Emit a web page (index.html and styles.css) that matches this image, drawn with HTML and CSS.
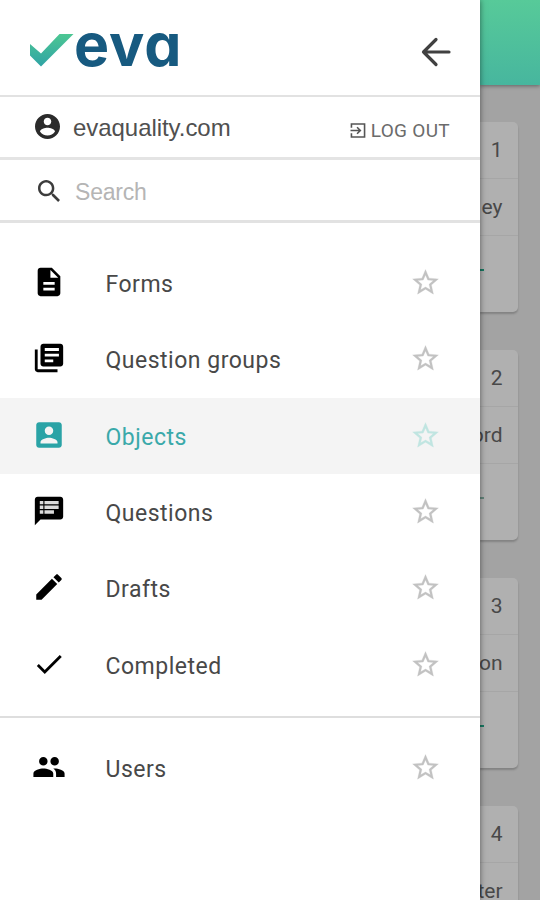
FILE: index.html
```
<!DOCTYPE html>
<html lang="en">
<head>
<meta charset="utf-8">
<title>eva</title>
<link rel="stylesheet" href="styles.css">
</head>
<body>
<div class="app">
  <aside class="drawer">
    <header class="brand">
      <div class="logo">
        <svg class="logo-check" viewBox="0 0 44 34" aria-hidden="true">
          <defs><linearGradient id="g" x1="0" y1="1" x2="0" y2="0"><stop offset="0" stop-color="#2fa3a5"/><stop offset="1" stop-color="#4dc793"/></linearGradient></defs>
          <path fill="url(#g)" d="M0 11L11 20.5L29.5 1H43.500L11 33.500L0 22.500Z"/>
        </svg>
        <span class="wordmark">eva</span>
      </div>
      <svg class="back" viewBox="0 0 30 30" aria-hidden="true"><path d="M28 15H2.500M15 2.500L2.500 15L15 27.500"/></svg>
    </header>
    <div class="account">
      <svg class="avatar" viewBox="2 2 20 20" aria-hidden="true"><path d="M12 2C6.480 2 2 6.480 2 12s4.480 10 10 10 10-4.480 10-10S17.520 2 12 2zm0 3c1.660 0 3 1.340 3 3s-1.340 3-3 3-3-1.340-3-3 1.340-3 3-3zm0 14.200c-2.500 0-4.710-1.280-6-3.220.030-1.990 4-3.080 6-3.080 1.990 0 5.970 1.090 6 3.080-1.290 1.940-3.500 3.220-6 3.220z"/></svg>
      <span class="domain">evaquality.com</span>
      <svg class="exit" viewBox="0 0 16 16" aria-hidden="true"><path d="M1 5V1H15V15H1V11M0 8H10.500M7 4.500L10.500 8L7 11.500"/></svg>
      <span class="logout">LOG OUT</span>
    </div>
    <div class="search">
      <svg class="lens" viewBox="3 3 17.500 17.500" aria-hidden="true"><path d="M15.500 14h-.790l-.280-.270C15.410 12.590 16 11.110 16 9.500 16 5.910 13.090 3 9.500 3S3 5.910 3 9.500 5.910 16 9.500 16c1.610 0 3.090-.590 4.230-1.570l.270.280v.790l5 4.990L20.490 19l-4.990-5zm-6 0C7.010 14 5 11.990 5 9.500S7.010 5 9.500 5 14 7.010 14 9.500 11.990 14 9.500 14z"/></svg>
      <span class="placeholder">Search</span>
    </div>
    <nav class="menu">
      <a class="item">
        <svg class="icon" viewBox="0 0 24 24"><path d="M14 2H6c-1.100 0-1.990.900-1.990 2L4 20c0 1.100.890 2 1.990 2H18c1.100 0 2-.900 2-2V8l-6-6zm2 16H8v-2h8v2zm0-4H8v-2h8v2zm-3-5V3.500L18.500 9H13z"/></svg>
        <span class="label">Forms</span><svg class="star" viewBox="0 0 24 24"><use href="#star"/></svg>
      </a>
      <a class="item">
        <svg class="icon" viewBox="0 0 24 24"><path d="M4 6H2v14c0 1.100.900 2 2 2h14v-2H4V6zm16-4H8c-1.100 0-2 .900-2 2v12c0 1.100.900 2 2 2h12c1.100 0 2-.900 2-2V4c0-1.100-.900-2-2-2zm-1 9H9V9h10v2zm-4 4H9v-2h6v2zm4-8H9V5h10v2z"/></svg>
        <span class="label">Question groups</span><svg class="star" viewBox="0 0 24 24"><use href="#star"/></svg>
      </a>
      <a class="item active">
        <svg class="icon" viewBox="0 0 24 24"><path d="M3 5v14c0 1.100.890 2 2 2h14c1.100 0 2-.900 2-2V5c0-1.100-.900-2-2-2H5c-1.110 0-2 .900-2 2zm12 4c0 1.660-1.340 3-3 3s-3-1.340-3-3 1.340-3 3-3 3 1.340 3 3zm-9 8c0-2 4-3.100 6-3.100s6 1.100 6 3.100v1H6v-1z"/></svg>
        <span class="label">Objects</span><svg class="star" viewBox="0 0 24 24"><use href="#star"/></svg>
      </a>
      <a class="item">
        <svg class="icon" viewBox="0 0 24 24"><path d="M20 2H4c-1.100 0-2 .900-2 2v18l4-4h14c1.100 0 2-.900 2-2V4c0-1.100-.900-2-2-2z"/><path class="sheet" d="M5.500 5H8v2.300H5.500zM8.800 5h10v2.300h-10zM5.500 8.100H8v2.500H5.500zM8.800 8.100h10v2.500h-10zM5.500 11.400H8V14H5.500zM8.800 11.400h6.700V14H8.800z"/></svg>
        <span class="label">Questions</span><svg class="star" viewBox="0 0 24 24"><use href="#star"/></svg>
      </a>
      <a class="item">
        <svg class="icon" viewBox="0 0 24 24"><path d="M3 17.250V21h3.750L17.810 9.940l-3.750-3.750L3 17.250zM20.710 7.040c.390-.390.390-1.020 0-1.410l-2.340-2.340c-.390-.390-1.020-.390-1.410 0l-1.830 1.830 3.750 3.750 1.830-1.830z"/></svg>
        <span class="label">Drafts</span><svg class="star" viewBox="0 0 24 24"><use href="#star"/></svg>
      </a>
      <a class="item">
        <svg class="icon" viewBox="0 0 24 24"><path d="M9 16.170L4.830 12l-1.420 1.410L9 19 21 7l-1.410-1.410z"/></svg>
        <span class="label">Completed</span><svg class="star" viewBox="0 0 24 24"><use href="#star"/></svg>
      </a>
    </nav>
    <nav class="menu admin">
      <a class="item">
        <svg class="icon" viewBox="0 0 24 24"><path d="M16 11c1.660 0 2.990-1.340 2.990-3S17.660 5 16 5c-1.660 0-3 1.340-3 3s1.340 3 3 3zm-8 0c1.660 0 2.990-1.340 2.990-3S9.660 5 8 5C6.340 5 5 6.340 5 8s1.340 3 3 3zm0 2c-2.330 0-7 1.170-7 3.500V19h14v-2.500c0-2.330-4.670-3.500-7-3.500zm8 0c-.290 0-.620.020-.970.050 1.160.840 1.970 1.970 1.970 3.450V19h6v-2.500c0-2.330-4.670-3.500-7-3.500z"/></svg>
        <span class="label">Users</span>
        <svg class="star" viewBox="0 0 24 24"><path id="star" d="M22 9.240l-7.190-.620L12 2 9.190 8.630 2 9.240l5.460 4.730L5.820 21 12 17.270 18.180 21l-1.630-7.030L22 9.240zM12 15.400l-3.760 2.270 1-4.280-3.320-2.880 4.380-.380L12 6.100l1.710 4.040 4.380.380-3.320 2.880 1 4.280L12 15.400z"/></svg>
      </a>
    </nav>
  </aside>
  <main class="page">
    <div class="topbar"></div>
    <div class="cards">
      <section class="card"><div class="cell">1</div><div class="cell">ey</div><div class="cell actions"><i class="dash"></i></div></section>
      <section class="card"><div class="cell">2</div><div class="cell">ord</div><div class="cell actions"><i class="dash muted"></i></div></section>
      <section class="card"><div class="cell">3</div><div class="cell">on</div><div class="cell actions"><i class="dash"></i></div></section>
      <section class="card"><div class="cell">4</div><div class="cell">ter</div><div class="cell actions"></div></section>
    </div>
  </main>
</div>
</body>
</html>
```
FILE: styles.css
```
* { box-sizing: border-box; }
body { margin: 0; font-family: Roboto, "Liberation Sans", sans-serif; background: #a3a3a3; }
svg { display: block; flex: none; }
.app { display: flex; width: 540px; height: 900px; overflow: hidden; }
.drawer { width: 480px; flex: none; height: 900px; background: #fff; box-shadow: 0 0 6px rgba(0,0,0,.5); z-index: 1; }
.brand { height: 97px; border-bottom: 2px solid #e2e2e2; display: flex; align-items: center; padding: 4px 29px 0 30px; justify-content: space-between; }
.logo { display: flex; align-items: center; height: 60px; }
.logo-check { width: 44px; height: 34px; margin-top: 1px; }
.wordmark { font: 700 59px/60px Inter, sans-serif; font-feature-settings: "cv11"; color: #175a80; letter-spacing: .9px; margin-left: 0; margin-top: -9px; }
.back { width: 30px; height: 30px; margin-top: 4px; fill: none; stroke: #414141; stroke-width: 3.200; stroke-linecap: round; stroke-linejoin: round; }
.account { height: 63px; border-bottom: 3px solid #e4e4e4; display: flex; align-items: center; padding: 0 30px 0 35px; }
.avatar { width: 25px; height: 25px; margin-top: -1px; fill: #2b2b2b; }
.domain { font: 24px/30px "Liberation Sans", sans-serif; color: #505050; margin: 2px auto 0 13px; letter-spacing: -.05px; }
.exit { width: 16px; height: 15px; margin-top: 6px; fill: none; stroke: #555; stroke-width: 1.700; }
.logout { font-size: 19px; line-height: 24px; color: #6b6b6b; margin: 8px 0 0 5px; letter-spacing: .3px; }
.search { height: 63px; border-bottom: 3px solid #e2e2e2; display: flex; align-items: center; padding: 1px 0 0 38px; }
.lens { width: 22px; height: 22px; fill: #3c3c3c; }
.placeholder { font: 23px/28px "Liberation Sans", sans-serif; color: #b5b5b5; margin: 2px 0 0 15px; letter-spacing: -.2px; }
.menu { padding-top: 22.200px; height: 493px; }
.item { height: 76.400px; display: flex; align-items: center; padding: 0 39px 0 32px; color: #484848; }
.icon { width: 34px; height: 34px; margin-top: -3px; fill: #000; }
.sheet { fill: #dcdcdc; }
.label { font-size: 23px; line-height: 30px; letter-spacing: .5px; margin: 3px auto 0 39.500px; }
.star { width: 31px; height: 31px; margin-top: -2px; fill: #c2c2c2; stroke: #c2c2c2; stroke-width: .2; }
.active { background: #f4f4f4; color: #3aa9aa; }
.active .icon { fill: #2aa3a6; }
.active .star { fill: #c0e5e1; stroke: #c0e5e1; }
.admin { border-top: 2px solid #dedede; padding-top: 12px; height: auto; }
.page { flex: 1; min-width: 0; background: #a3a3a3; }
.topbar { height: 85px; background: linear-gradient(#57ca99, #47b69e); box-shadow: 0 1px 4px rgba(0,0,0,.4); }
.cards { display: flex; flex-direction: column; gap: 38px; padding: 37px 22.500px 0 0; }
.card { height: 190px; flex: none; background: #b0b0b0; border-radius: 0 5px 5px 0; box-shadow: 0 2px 2px rgba(0,0,0,.2); }
.cell { height: 57px; border-bottom: 1px solid #a6a6a6; display: flex; align-items: center; justify-content: flex-end; padding-right: 15px; font-size: 21px; color: #484848; }
.actions { height: 67px; border: 0; justify-content: flex-start; }
.dash { width: 4px; height: 2px; background: #187a63; }
.muted { background: #64857b; }
```
